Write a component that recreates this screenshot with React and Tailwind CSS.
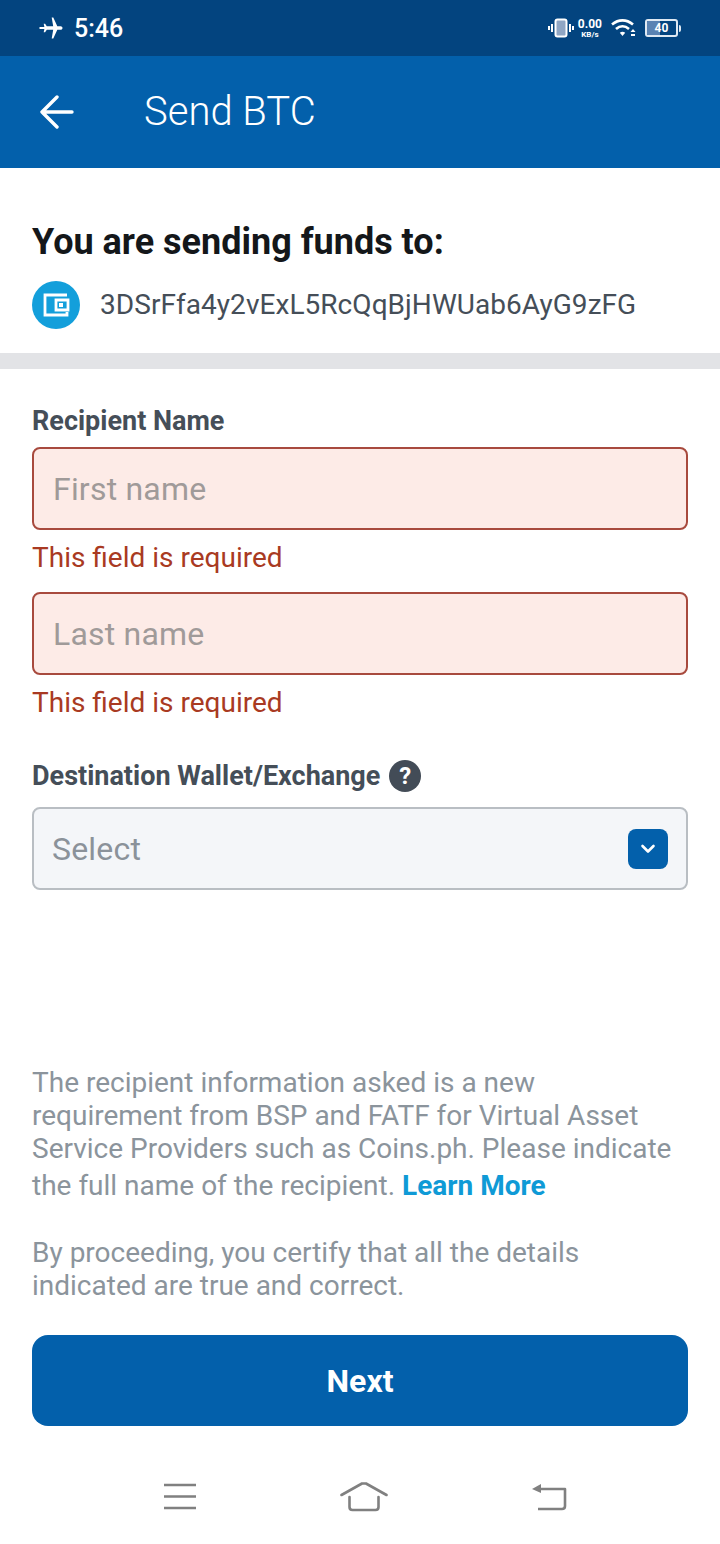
const font = { fontFamily: 'Roboto, sans-serif' };

function Plane() {
  return (
    <svg width="25" height="24" viewBox="0 0 24 24" fill="white">
      <path d="M13.2 1.5h1.6l4 8.7h3.4c.9 0 1.8.8 1.8 1.8s-.9 1.8-1.8 1.8h-3.4l-4 8.7h-1.6l1.5-8.7H8.3l-1.7 2.4H5.2l.9-4.2-.9-4.2h1.4l1.7 2.4h6.4z" transform="translate(-1 0)" />
      <path d="M0 11h8v2H0z" />
    </svg>
  );
}

function StatusRight() {
  return (
    <div className="flex items-center">
      <svg width="26" height="22" viewBox="0 0 26 22" fill="none" className="mr-[4px]">
        <rect x="7.5" y="2.5" width="11" height="17" rx="2" fill="#8fa6c4" stroke="white" strokeWidth="2" />
        <path d="M4 7v8M1 9v4M22 7v8M25 9v4" stroke="white" strokeWidth="2" />
      </svg>
      <div className="flex flex-col items-center text-white font-bold leading-none mr-[9px]">
        <span className="text-[12px] leading-[12px]">0.00</span>
        <span className="text-[8px] leading-[9px]">KB/s</span>
      </div>
      <svg width="26" height="22" viewBox="0 0 26 22" fill="none" className="mr-[8px]">
        <path d="M1 7.5c6.5-5.5 14.500-5.500 21 0" stroke="white" strokeWidth="2.600" />
        <path d="M5 12c4-3.500 9-3.500 13 0" stroke="white" strokeWidth="2.600" />
        <path d="M8.800 15.800c1.800-1.500 3.600-1.500 5.400 0L11.500 19z" fill="white" />
        <path d="M22 12l2.500 3h-5z" fill="white" />
        <path d="M20 17h4v2h-4z" fill="white" />
      </svg>
      <div className="relative w-[33px] h-[18px] rounded-[3px] border-2 border-[#dfe9f3] overflow-hidden flex items-center justify-center">
        <div className="absolute left-0 top-0 bottom-0 w-[13px] bg-[#5a83b3]" />
        <span className="relative text-white font-bold text-[12px] leading-none">40</span>
      </div>
      <div className="w-[2px] h-[7px] bg-[#dfe9f3] ml-[1px] rounded-r-sm" />
    </div>
  );
}

function Field({ placeholder }) {
  return (
    <div>
      <div className="h-[83px] rounded-[8px] border-2 border-[#a84a3e] bg-[#fdebe7] flex items-center pl-[19px] text-[32px] text-[#a09a99] tracking-[0.2px]">
        {placeholder}
      </div>
      <div className="mt-[12px] h-[32px] flex items-center text-[28px] text-[#a93a22]">This field is required</div>
    </div>
  );
}

export default function App() {
  return (
    <div className="w-[720px] h-[1544px] bg-white flex flex-col overflow-hidden" style={font}>
      <div className="h-[56px] shrink-0 bg-[#03447f] flex items-center justify-between pl-[39px] pr-[39px]">
        <div className="flex items-center gap-[10px]">
          <Plane />
          <span className="text-white text-[25px] font-medium leading-none">5:46</span>
        </div>
        <StatusRight />
      </div>

      <div className="h-[112px] shrink-0 bg-[#0360ab] flex items-center pl-[40px] border-b-0">
        <svg width="34" height="34" viewBox="0 0 34 34" fill="none" stroke="white" strokeWidth="3.400" strokeLinecap="round" strokeLinejoin="round">
          <path d="M17 2 2 17l15 15M2 17h30" />
        </svg>
        <span className="ml-[70px] text-white text-[40px] font-light leading-none">Send BTC</span>
      </div>

      <div className="h-[185px] shrink-0 px-[32px] pt-[53px]">
        <div className="text-[36px] leading-[42px] font-bold text-[#14171a]">You are sending funds to:</div>
        <div className="flex items-center mt-[18px]">
          <div className="w-[48px] h-[48px] rounded-full bg-[#139fdb] flex items-center justify-center">
            <svg width="28" height="28" viewBox="0 0 28 28" fill="none" stroke="white" strokeWidth="2.800">
              <path d="M25 4H3v20h22v-3" />
              <path d="M14 9h12v10H14z" />
              <rect x="17.500" y="12.500" width="3" height="3" fill="white" strokeWidth="1" />
            </svg>
          </div>
          <div className="ml-[20px] text-[28px] leading-[32px] text-[#454e58] tracking-[0.05px]">3DSrFfa4y2vExL5RcQqBjHWUab6AyG9zFG</div>
        </div>
      </div>

      <div className="h-[16px] shrink-0 bg-[#e2e3e6]" />

      <div className="px-[32px] pt-[36px] flex-1 flex flex-col">
        <div className="text-[27px] leading-[32px] font-bold text-[#454e58] mb-[10px]">Recipient Name</div>
        <div className="flex flex-col gap-[18px]">
          <Field placeholder="First name" />
          <Field placeholder="Last name" />
        </div>

        <div className="flex items-center gap-[9px] mt-[41px] h-[32px]">
          <span className="text-[27px] leading-[32px] font-bold text-[#454e58]">Destination Wallet/Exchange</span>
          <span className="w-[32px] h-[32px] rounded-full bg-[#434c57] text-white flex items-center justify-center text-[24px] font-bold leading-none">?</span>
        </div>
        <div className="mt-[15px] h-[83px] rounded-[8px] border-2 border-[#b9bec3] bg-[#f4f6f9] flex items-center justify-between pl-[18px] pr-[18px]">
          <span className="text-[32px] text-[#8b929a] tracking-[0.2px]">Select</span>
          <span className="w-[40px] h-[40px] rounded-[8px] bg-[#0360ab] flex items-center justify-center">
            <svg width="16" height="12" viewBox="0 0 16 12" fill="none" stroke="white" strokeWidth="2.600" strokeLinecap="round" strokeLinejoin="round">
              <path d="M2.500 3 8 8.500 13.500 3" />
            </svg>
          </span>
        </div>

        <div className="mt-[176px] text-[28px] leading-[33px] text-[#8b949c]">
          <div>The recipient information asked is a new</div>
          <div>requirement from BSP and FATF for Virtual Asset</div>
          <div>Service Providers such as Coins.ph. Please indicate</div>
          <div className="mt-[4px]">the full name of the recipient. <span className="font-bold text-[#0f9ad6]">Learn More</span></div>
        </div>
        <div className="mt-[34px] text-[28px] leading-[33px] text-[#8b949c]">
          <div>By proceeding, you certify that all the details</div>
          <div>indicated are true and correct.</div>
        </div>

        <div className="mt-[33px] h-[91px] shrink-0 rounded-[16px] bg-[#0360ab] flex items-center justify-center text-white text-[32px] font-bold">Next</div>

        <div className="flex justify-between items-center mt-[56px] pl-[131px] pr-[121px]">
          <svg width="34" height="28" viewBox="0 0 34 28" fill="none" stroke="#808080" strokeWidth="2.600">
            <path d="M1 2h32M1 13.500h32M1 25h32" />
          </svg>
          <svg width="48" height="30" viewBox="0 0 48 30" fill="none" stroke="#808080" strokeWidth="2.600" strokeLinecap="round" strokeLinejoin="round">
            <path d="M1.500 13 22 1.500h4L46.500 13" />
            <path d="M9.500 15v10c0 2 1 3 3 3h23c2 0 3-1 3-3V15" />
          </svg>
          <svg width="36" height="28" viewBox="0 0 36 28" fill="none" stroke="#808080" strokeWidth="2.600" strokeLinejoin="round">
            <path d="M9 6h25v17c0 2-1 3-3 3H7" />
            <path d="M1 6l9-5v9z" fill="#808080" stroke="none" />
          </svg>
        </div>
      </div>
    </div>
  );
}
